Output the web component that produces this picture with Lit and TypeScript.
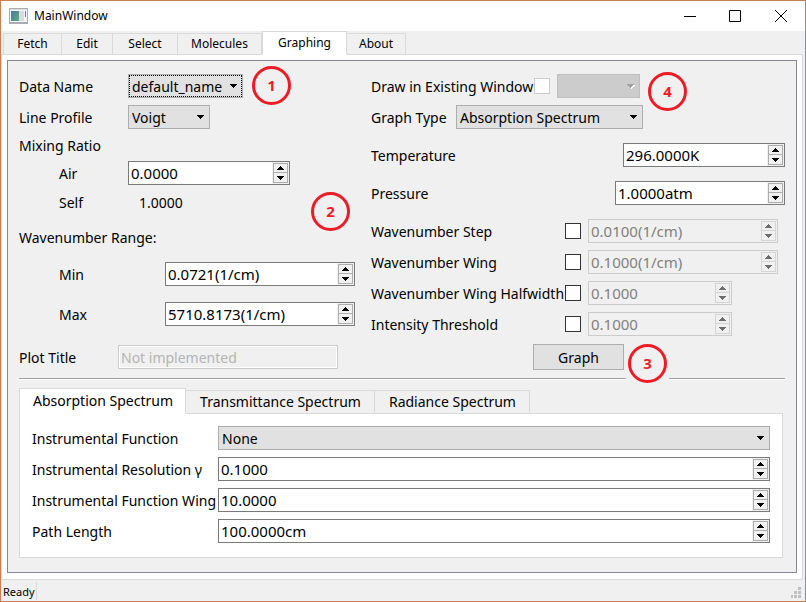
import { LitElement, html, css, svg, nothing } from "lit";
import { customElement, property, state } from "lit/decorators.js";
import { classMap } from "lit/directives/class-map.js";

const arrowDown = svg`<path d="M0 0h7v1H6v1H5v1H4v1H3V3H2V2H1V1H0z"/>`;
const arrowUp = svg`<path d="M3 0h1v1h1v1h1v1h1v1H0V3h1V2h1V1h1z"/>`;

@customElement("spin-box")
class SpinBox extends LitElement {
  @property() value = "";
  @property() label = "";
  @property({ type: Boolean, reflect: true }) disabled = false;

  static styles = css`
    :host {
      display: flex;
      box-sizing: border-box;
      height: 24px;
      border: 1px solid #7a7a7a;
      background: #fff;
    }
    :host([disabled]) {
      border-color: #ccc;
      background: #f0f0f0;
    }
    .text {
      flex: 1;
      min-width: 0;
      border: 0;
      padding: 0 2px;
      background: transparent;
      color: #000;
      font: 15px/22px "Noto Sans", sans-serif;
      outline: none;
    }
    .text:disabled {
      color: #808080;
    }
    .steps {
      display: grid;
      grid-template-rows: 10px 10px;
      width: 15px;
      padding: 1px;
      background: #f0f0f0;
    }
    .step {
      display: grid;
      place-items: center;
      box-sizing: border-box;
      padding: 0;
      border: 1px solid #adadad;
      background: #f0f0f0;
    }
    .step + .step {
      border-top: 0;
    }
    .step:disabled {
      border-color: #d4d4d4;
    }
    .glyph {
      display: block;
      width: 7px;
      height: 4px;
      fill: #000;
      shape-rendering: crispEdges;
    }
    .step:disabled .glyph {
      fill: #6d6d6d;
    }
  `;

  render() {
    return html`
      <input class="text" type="text" aria-label=${this.label} .value=${this.value} ?disabled=${this.disabled} />
      <div class="steps">
        <button class="step" aria-label="Increase" ?disabled=${this.disabled}>
          <svg class="glyph" viewBox="0 0 7 4">${arrowUp}</svg>
        </button>
        <button class="step" aria-label="Decrease" ?disabled=${this.disabled}>
          <svg class="glyph" viewBox="0 0 7 4">${arrowDown}</svg>
        </button>
      </div>
    `;
  }
}

@customElement("combo-box")
class ComboBox extends LitElement {
  @property() label = "";
  @property({ type: Array }) options: string[] = [];
  @property({ type: Boolean, reflect: true }) disabled = false;
  @property({ type: Boolean, reflect: true }) active = false;

  static styles = css`
    :host {
      display: grid;
      align-items: center;
      height: 24px;
    }
    .list,
    .glyph {
      grid-area: 1 / 1;
    }
    .list {
      box-sizing: border-box;
      width: 100%;
      height: 24px;
      margin: 0;
      padding: 2px 3px 0;
      border: 1px solid #adadad;
      border-radius: 0;
      appearance: none;
      background: #e1e1e1;
      color: #000;
      font: 14px/20px "Noto Sans", sans-serif;
      outline: none;
    }
    :host([active]) .list {
      outline: 1px dotted #000;
      outline-offset: -2px;
    }
    .list:disabled {
      border-color: #bfbfbf;
      background: #ccc;
      opacity: 1;
    }
    .glyph {
      justify-self: end;
      width: 8px;
      height: 5px;
      margin-right: 5px;
      fill: #000;
      pointer-events: none;
      shape-rendering: crispEdges;
    }
    :host([disabled]) .glyph {
      fill: #a0a0a0;
    }
    :host([disabled]) .shade {
      fill: #fff;
    }
  `;

  render() {
    return html`
      <select class="list" aria-label=${this.label} ?disabled=${this.disabled}>
        ${this.options.map((o) => html`<option>${o}</option>`)}
      </select>
      <svg class="glyph" viewBox="0 0 8 5">
        ${this.disabled ? svg`<g class="shade" transform="translate(1 1)">${arrowDown}</g>` : nothing}
        ${arrowDown}
      </svg>
    `;
  }
}

@customElement("app-root")
class AppRoot extends LitElement {
  @state() private page = "Graphing";
  @state() private spectrum = "Absorption Spectrum";

  static styles = css`
    :host {
      display: flex;
      flex-direction: column;
      box-sizing: border-box;
      min-height: 100vh;
      border: 1px solid #c8804f;
      background: #f0f0f0;
      color: #000;
      font: 14px/18px "Noto Sans", sans-serif;
      white-space: nowrap;
    }
    .title-bar {
      display: flex;
      align-items: center;
      height: 30px;
      padding: 0 16px 0 8px;
      background: #fff;
    }
    .app-icon {
      width: 19px;
      height: 16px;
      margin-right: 6px;
    }
    .window-title {
      flex: 1;
      font-weight: 400;
      font-size: 12px;
      margin: 0;
    }
    .window-buttons {
      display: flex;
      gap: 30px;
    }
    .window-button {
      padding: 0;
      border: 0;
      background: none;
    }
    .window-glyph {
      display: block;
      width: 16px;
      height: 14px;
      fill: none;
      stroke: #000;
    }
    .tabs {
      display: flex;
      align-items: flex-end;
      position: relative;
      margin-bottom: -1px;
    }
    .tab {
      box-sizing: border-box;
      border: 1px solid #d9d9d9;
      border-left-width: 0;
      background: #f0f0f0;
      color: #000;
      font-family: inherit;
    }
    .tab:first-child,
    .tab.selected {
      border-left-width: 1px;
    }
    .tab.selected {
      border-bottom-color: #fff;
      background: #fff;
    }
    .main-tabs {
      display: grid;
      grid-template-columns: 59px 51px 65px 84px 85px 59px;
      height: 24px;
      padding-left: 2px;
    }
    .main-tabs .tab {
      height: 22px;
      padding: 0;
      font-size: 12px;
      line-height: 20px;
    }
    .main-tabs .tab.selected {
      height: 24px;
    }
    .page {
      flex: 1;
      display: flex;
      margin-right: 2px;
      padding: 5px 5px 6px;
      border: 1px solid #d9d9d9;
      background: #fff;
    }
    .frame {
      flex: 1;
      min-width: 0;
      padding: 13px 11px 14px;
      border: 1px solid #828790;
      background: #f0f0f0;
    }
    .form {
      display: grid;
      grid-template-columns: 352fr 414fr;
    }
    .column,
    .group {
      display: flex;
      flex-direction: column;
      gap: 7px;
    }
    .spaced {
      gap: 14px;
    }
    .row {
      display: flex;
      align-items: center;
      height: 24px;
    }
    .heading {
      height: 18px;
    }
    .readout {
      height: 22px;
    }
    .caption {
      padding-top: 2px;
    }
    .name {
      width: 109px;
    }
    .name.short {
      width: 99px;
    }
    .indent {
      box-sizing: border-box;
      padding-left: 40px;
    }
    .name.wide {
      width: 146px;
    }
    .range {
      gap: 16px;
      margin-top: 7px;
    }
    .plot {
      margin-top: 12px;
    }
    .anchor {
      position: relative;
    }
    .badge {
      display: block;
      box-sizing: border-box;
      width: 39px;
      height: 39px;
      border: 3px solid #ed1c24;
      border-radius: 50%;
      color: #ed1c24;
      font-size: 15px;
      font-weight: 700;
      line-height: 33px;
      text-align: center;
    }
    .note {
      position: absolute;
      z-index: 1;
      padding: 0 2px;
      background: #f0f0f0;
    }
    .note.beside {
      top: -8px;
      left: calc(100% + 7px);
    }
    .note.level {
      top: -2px;
      left: calc(100% + 6px);
    }
    .note.button-side {
      top: 0;
      left: calc(100% + 2px);
    }
    .note.corner {
      top: 0;
      right: 19px;
    }
    .self-value {
      padding-left: 11px;
    }
    .w83 { width: 83px; }
    .w82 { width: 82px; }
    .w115 { width: 115px; }
    .w144 { width: 144px; }
    .w162 { width: 162px; }
    .w170 { width: 170px; }
    .w187 { width: 187px; }
    .w190 { width: 190px; }
    .apart {
      justify-content: space-between;
    }
    .check {
      appearance: none;
      box-sizing: border-box;
      width: 16px;
      height: 16px;
      margin: 0 7px 0 6px;
      border: 1px solid #333;
      background: #fff;
    }
    .check:disabled {
      border-color: #ccc;
    }
    .option-name {
      width: 188px;
    }
    .draw-name {
      width: 157px;
    }
    .graph-type {
      width: 85px;
    }
    .plot-title {
      box-sizing: border-box;
      width: 220px;
      height: 24px;
      padding: 0 2px;
      border: 1px solid #ccc;
      box-shadow: inset 0 0 0 1px #fff;
      background: #f0f0f0;
      font: 14px/20px "Noto Sans", sans-serif;
    }
    .plot-title::placeholder {
      color: #b4b4b4;
    }
    .submit {
      position: relative;
      align-self: flex-start;
      margin: -6px 0 0 162px;
    }
    .graph-button {
      display: block;
      width: 91px;
      height: 26px;
      padding: 2px 0 0;
      border: 1px solid #adadad;
      background: #e1e1e1;
      color: #000;
      font: 14px/22px "Noto Sans", sans-serif;
    }
    .rule {
      height: 1px;
      margin: 8px 0;
      border: 0;
      border-bottom: 1px solid #fff;
      background: #a0a0a0;
    }
    .sub-tabs .tab {
      height: 24px;
      padding: 0 13px 0 14px;
      font-size: 14px;
      line-height: 22px;
    }
    .sub-tabs .tab.selected {
      height: 26px;
      padding: 0 12px 0 13px;
    }
    .settings {
      display: grid;
      grid-template-columns: auto 1fr;
      align-items: center;
      gap: 7px 2px;
      margin-right: 2px;
      padding: 12px 12px 14px;
      border: 1px solid #d9d9d9;
      background: #fff;
    }
    .status-bar {
      display: flex;
      align-items: center;
      height: 21px;
      padding: 0 2px;
      font-size: 11px;
    }
    .status {
      padding: 2px 1px 0 0;
      border-right: 1px solid #d9d9d9;
      line-height: 16px;
    }
    .grip {
      width: 10px;
      height: 11px;
      margin: 4px 2px 0 auto;
      fill: #bfbfbf;
      shape-rendering: crispEdges;
    }
  `;

  private tabs(names: string[], current: string, kind: string, pick: (n: string) => void) {
    return html`<div class="tabs ${kind}" role="tablist">
      ${names.map(
        (n) => html`<button
          class=${classMap({ tab: true, selected: n === current })}
          role="tab"
          aria-selected=${n === current}
          @click=${() => pick(n)}
        >${n}</button>`
      )}
    </div>`;
  }

  private note(n: number, place: string) {
    return html`<span class="note ${place}"><span class="badge">${n}</span></span>`;
  }

  private option(id: string, name: string, value: string, width: string) {
    return html`<div class="row">
      <label class="caption option-name" for=${id}>${name}</label>
      <input class="check" id=${id} type="checkbox" />
      <spin-box class=${width} label=${name} value=${value} disabled></spin-box>
    </div>`;
  }

  render() {
    return html`
      <header class="title-bar">
        <svg class="app-icon" viewBox="0 0 19 16">
          <defs>
            <linearGradient id="screen" x1="0" y1="0" x2="1" y2="1">
              <stop offset="0" stop-color="#4a74a4" />
              <stop offset="1" stop-color="#5cb07e" />
            </linearGradient>
          </defs>
          <path fill="#a9adb3" d="M0 0h19v16H0z" />
          <path fill="#f4f5f7" d="M1 2h17v12H1z" />
          <path fill="#d9dbdf" d="M1 1h17v1H1zM10 3h5v10h-5z" />
          <path fill="url(#screen)" d="M2 3h8v10H2z" />
          <path fill="#4a8fa0" d="M16 3h1v6h-1z" />
        </svg>
        <h1 class="window-title">MainWindow</h1>
        <div class="window-buttons">
          <button class="window-button" aria-label="Minimize">
            <svg class="window-glyph" viewBox="0 0 16 14"><path d="M3 7.5h12" /></svg>
          </button>
          <button class="window-button" aria-label="Maximize">
            <svg class="window-glyph" viewBox="0 0 16 14"><path d="M2.500 1.500h11v11h-11z" /></svg>
          </button>
          <button class="window-button" aria-label="Close">
            <svg class="window-glyph" viewBox="0 0 16 14"><path d="M2 1l12 12M14 1L2 13" /></svg>
          </button>
        </div>
      </header>

      ${this.tabs(["Fetch", "Edit", "Select", "Molecules", "Graphing", "About"], this.page, "main-tabs", (n) => (this.page = n))}

      <main class="page">
        <div class="frame">
          <div class="form">
            <div class="column">
              <div class="row">
                <span class="caption name">Data Name</span>
                <div class="anchor">
                  <combo-box class="w115" label="Data Name" .options=${["default_name"]} active></combo-box>
                  ${this.note(1, "beside")}
                </div>
              </div>
              <div class="row">
                <span class="caption name">Line Profile</span>
                <combo-box class="w82" label="Line Profile" .options=${["Voigt"]}></combo-box>
              </div>
              <div class="row heading"><span class="caption">Mixing Ratio</span></div>
              <div class="row">
                <span class="caption name indent">Air</span>
                <spin-box class="w162" label="Air" value="0.0000"></spin-box>
              </div>
              <div class="row readout anchor">
                <span class="name indent">Self</span>
                <span class="self-value">1.0000</span>
                ${this.note(2, "corner")}
              </div>
              <div class="group range">
                <div class="row heading"><span class="caption">Wavenumber Range:</span></div>
                <div class="row">
                  <span class="caption name wide indent">Min</span>
                  <spin-box class="w190" label="Min" value="0.0721(1/cm)"></spin-box>
                </div>
                <div class="row">
                  <span class="caption name wide indent">Max</span>
                  <spin-box class="w190" label="Max" value="5710.8173(1/cm)"></spin-box>
                </div>
              </div>
              <div class="row plot">
                <label class="caption name short" for="plot">Plot Title</label>
                <input class="plot-title" id="plot" type="text" placeholder="Not implemented" disabled />
              </div>
            </div>

            <div class="column spaced">
              <div class="group">
                <div class="row">
                  <label class="caption draw-name" for="draw">Draw in Existing Window</label>
                  <input class="check" id="draw" type="checkbox" disabled />
                  <div class="anchor">
                    <combo-box class="w83" label="Existing window" disabled></combo-box>
                    ${this.note(4, "level")}
                  </div>
                </div>
                <div class="row">
                  <span class="caption graph-type">Graph Type</span>
                  <combo-box class="w187" label="Graph Type" .options=${["Absorption Spectrum"]}></combo-box>
                </div>
              </div>
              <div class="row apart">
                <span class="caption">Temperature</span>
                <spin-box class="w162" label="Temperature" value="296.0000K"></spin-box>
              </div>
              <div class="row apart">
                <span class="caption">Pressure</span>
                <spin-box class="w170" label="Pressure" value="1.0000atm"></spin-box>
              </div>
              <div class="group">
                ${this.option("step", "Wavenumber Step", "0.0100(1/cm)", "w190")}
                ${this.option("wing", "Wavenumber Wing", "0.1000(1/cm)", "w190")}
                ${this.option("half", "Wavenumber Wing Halfwidth", "0.1000", "w144")}
                ${this.option("threshold", "Intensity Threshold", "0.1000", "w144")}
              </div>
              <div class="submit">
                <button class="graph-button">Graph</button>
                ${this.note(3, "button-side")}
              </div>
            </div>
          </div>

          <hr class="rule" />

          ${this.tabs(
            ["Absorption Spectrum", "Transmittance Spectrum", "Radiance Spectrum"],
            this.spectrum,
            "sub-tabs",
            (n) => (this.spectrum = n)
          )}
          <section class="settings">
            <span class="caption">Instrumental Function</span>
            <combo-box label="Instrumental Function" .options=${["None"]}></combo-box>
            <span class="caption">Instrumental Resolution γ</span>
            <spin-box label="Instrumental Resolution γ" value="0.1000"></spin-box>
            <span class="caption">Instrumental Function Wing</span>
            <spin-box label="Instrumental Function Wing" value="10.0000"></spin-box>
            <span class="caption">Path Length</span>
            <spin-box label="Path Length" value="100.0000cm"></spin-box>
          </section>
        </div>
      </main>

      <footer class="status-bar">
        <span class="status">Ready</span>
        <svg class="grip" viewBox="0 0 10 11">
          <path d="M7 0h3v3H7zM3 4h3v3H3zM7 4h3v3H7zM0 8h2v3H0zM3 8h3v3H3zM7 8h3v3H7z" />
        </svg>
      </footer>
    `;
  }
}
